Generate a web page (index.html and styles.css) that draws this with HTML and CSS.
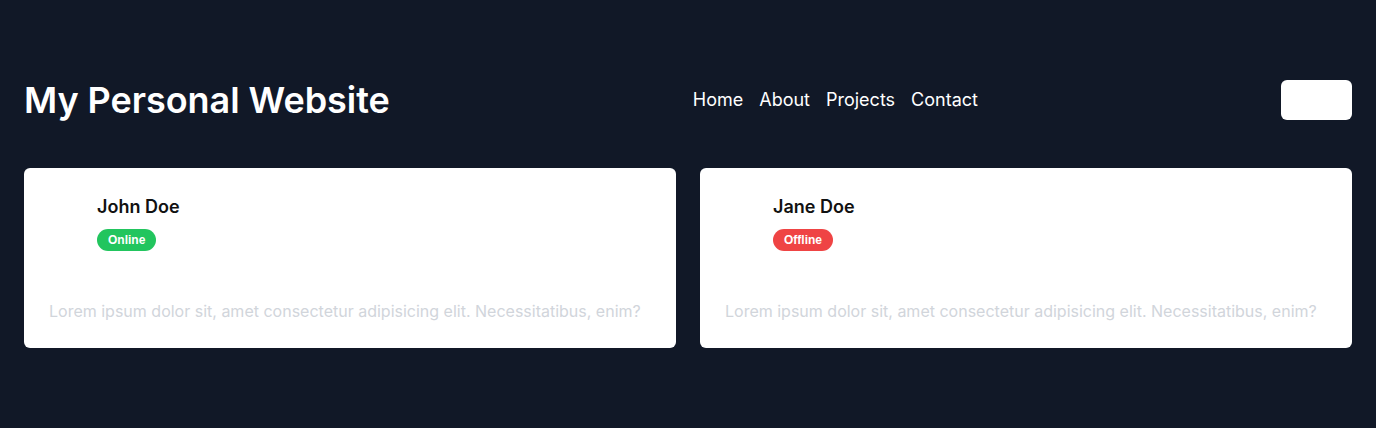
FILE: index.html
```html
<!DOCTYPE html>
<html lang="en">
<head>
<meta charset="utf-8">
<title>My Personal Website</title>
<link rel="stylesheet" href="styles.css">
</head>
<body>
<div class="page">
  <header class="header">
    <h1 class="title">My Personal Website</h1>
    <nav class="nav">
      <a href="#">Home</a>
      <a href="#">About</a>
      <a href="#">Projects</a>
      <a href="#">Contact</a>
    </nav>
    <button class="btn" type="button"></button>
  </header>
  <main class="cards">
    <section class="card">
      <div class="card-head">
        <div class="avatar"></div>
        <div class="info">
          <h2 class="name">John Doe</h2>
          <span class="badge online">Online</span>
        </div>
      </div>
      <p class="text">Lorem ipsum dolor sit, amet consectetur adipisicing elit. Necessitatibus, enim?</p>
    </section>
    <section class="card">
      <div class="card-head">
        <div class="avatar"></div>
        <div class="info">
          <h2 class="name">Jane Doe</h2>
          <span class="badge offline">Offline</span>
        </div>
      </div>
      <p class="text">Lorem ipsum dolor sit, amet consectetur adipisicing elit. Necessitatibus, enim?</p>
    </section>
  </main>
</div>
</body>
</html>
```

FILE: styles.css
```css
* { box-sizing: border-box; }
html, body {
  margin: 0;
  padding: 0;
  background: #111827;
  font-family: Inter, "Noto Sans", sans-serif;
}
.page {
  padding: 80px 24px 24px;
}
.header {
  display: flex;
  align-items: center;
  justify-content: space-between;
  height: 40px;
}
.title {
  margin: 0;
  font-size: 36px;
  line-height: 40px;
  font-weight: 600;
  letter-spacing: -0.05px;
  color: #ffffff;
}
.nav {
  display: flex;
  gap: 16px;
}
.nav a {
  color: #ffffff;
  text-decoration: none;
  font-size: 18px;
  line-height: 28px;
}
.btn {
  width: 71px;
  height: 40px;
  border: none;
  border-radius: 6px;
  background: #ffffff;
  padding: 0;
}
.cards {
  display: grid;
  grid-template-columns: 1fr 1fr;
  gap: 24px;
  margin-top: 48px;
}
.card {
  background: #ffffff;
  border-radius: 6px;
  padding: 25px 24px 25px 25px;
  height: 180px;
  display: flex;
  flex-direction: column;
}
.card-head {
  display: flex;
  gap: 16px;
}
.avatar {
  width: 32px;
  flex: none;
}
.info {
  display: flex;
  flex-direction: column;
  align-items: flex-start;
  gap: 8px;
}
.name {
  margin: 0;
  font-size: 18px;
  line-height: 28px;
  font-weight: 600;
  color: #111111;
}
.badge {
  display: inline-block;
  height: 22px;
  line-height: 22px;
  padding: 0 11px;
  border-radius: 9999px;
  font-family: "Liberation Sans", Arial, sans-serif;
  font-weight: 700;
  font-size: 12px;
  color: #ffffff;
}
.online { background: #22c55e; }
.offline { background: #ef4444; }
.text {
  margin: auto 0 0;
  font-size: 16px;
  line-height: 24px;
  color: #d1d5db;
}
```
